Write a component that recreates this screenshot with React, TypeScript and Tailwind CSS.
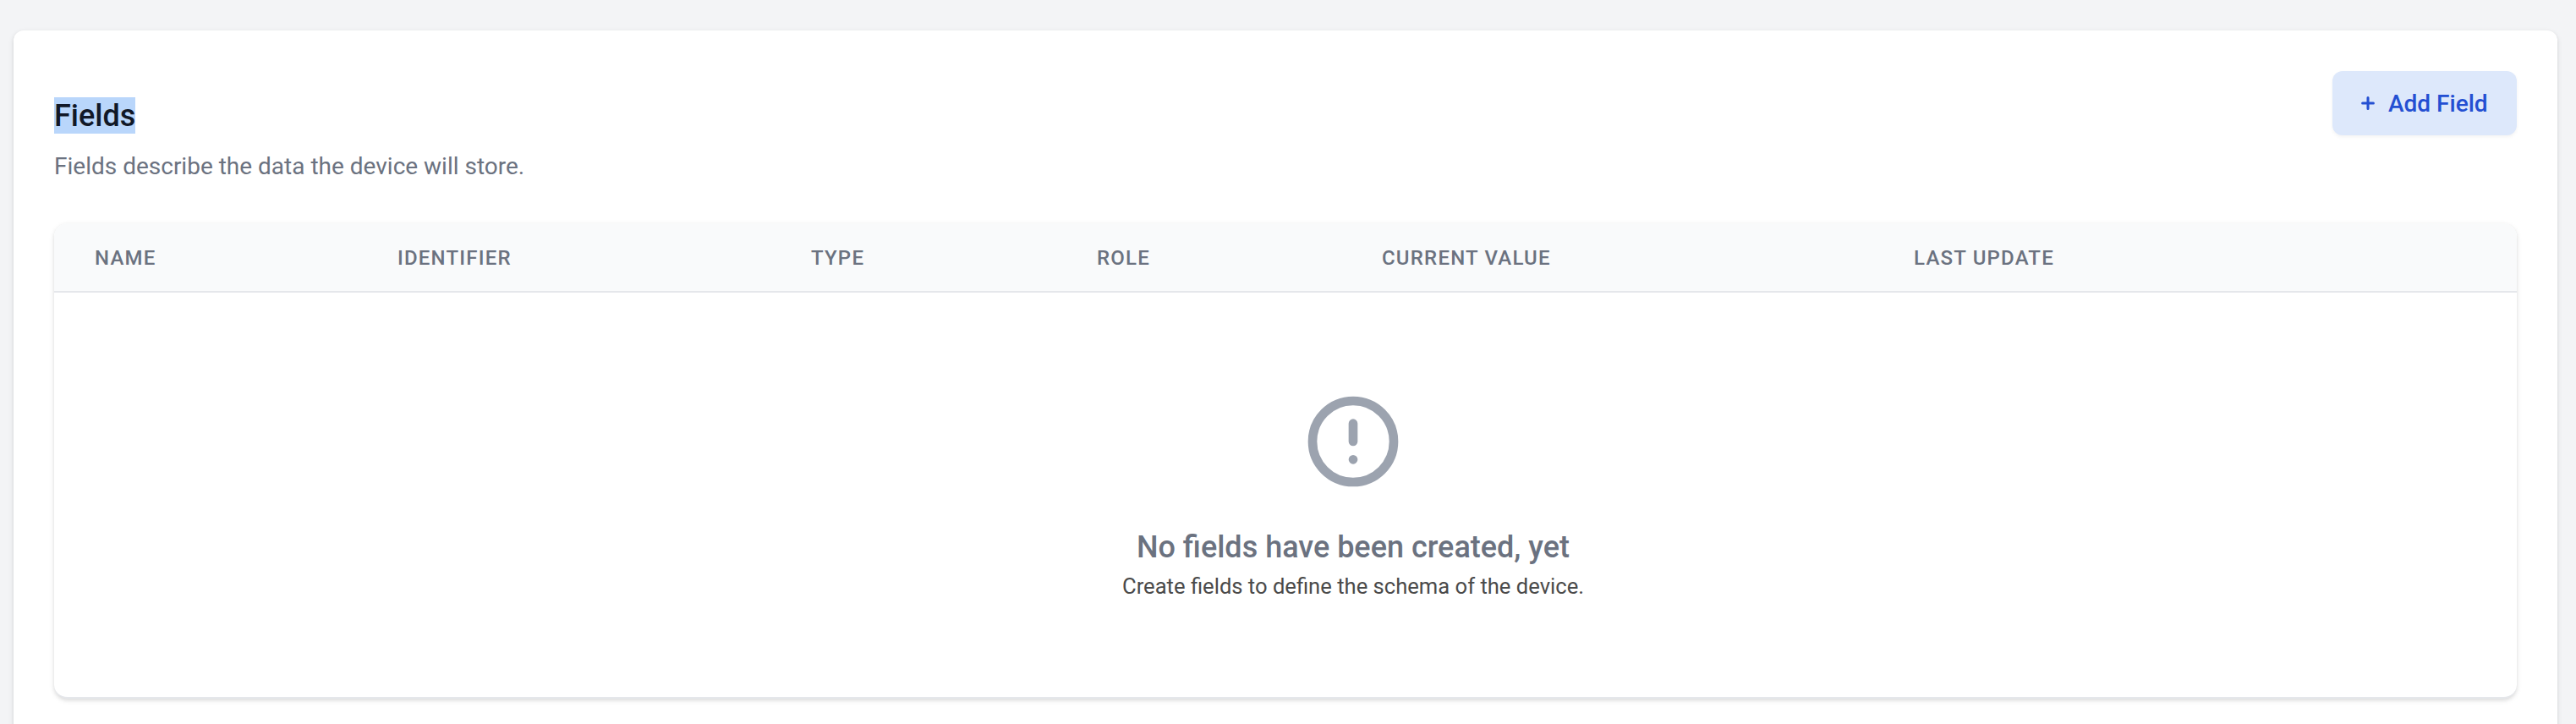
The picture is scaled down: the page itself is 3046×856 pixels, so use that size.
const columns = [
  { label: "Name", width: "w-[358px]" },
  { label: "Identifier", width: "w-[489px]" },
  { label: "Type", width: "w-[338px]" },
  { label: "Role", width: "w-[337px]" },
  { label: "Current value", width: "w-[629px]" },
  { label: "Last update", width: "w-[400px]" },
];

function PlusIcon() {
  return (
    <svg className="size-8" viewBox="0 0 20 20" fill="none" stroke="currentColor" strokeWidth={1.9} strokeLinecap="round">
      <path d="M10 6v8M6 10h8" />
    </svg>
  );
}

function ExclamationIcon() {
  return (
    <svg className="size-32 text-[#9ca3af]" viewBox="0 0 24 24" fill="none" stroke="currentColor" strokeWidth={2} strokeLinecap="round" strokeLinejoin="round">
      <path d="M12 8v4m0 4h.01M21 12a9 9 0 11-18 0 9 9 0 0118 0z" />
    </svg>
  );
}

export default function App() {
  return (
    <div className="h-[856px] overflow-hidden bg-[#f3f4f6] pt-9 pr-[22px] pl-4 font-['Roboto',sans-serif]">
      <section className="h-[900px] rounded-xl bg-white p-12 shadow-[0_2px_6px_rgba(0,0,0,0.1),0_2px_4px_rgba(0,0,0,0.06)]">
        <header className="flex h-[180px] items-start justify-between">
          <div className="pt-[29px]">
            <h3 className="text-4xl leading-[48px] font-medium text-[#111827]">
              <span className="bg-[#b9d6fb] pt-px">Fields</span>
            </h3>
            <p className="mt-4 text-[28px] leading-10 text-[#6b7280]">Fields describe the data the device will store.</p>
          </div>
          <button className="flex h-[76px] w-[218px] items-center rounded-xl bg-[#dde8fb] pl-[26px] text-[28px] leading-8 font-medium whitespace-nowrap text-[#244fd2] shadow-[0_2px_4px_rgba(0,0,0,0.05)]">
            <PlusIcon />
            <span className="ml-2 pt-0.5">Add Field</span>
          </button>
        </header>
        <div className="h-[562px] overflow-hidden rounded-2xl border-b-2 border-[#e5e7eb] bg-white shadow-[0_2px_6px_rgba(0,0,0,0.1),0_2px_4px_rgba(0,0,0,0.06)]">
          <div className="flex h-[82px] items-center border-b-2 border-[#e5e7eb] bg-[#f9fafb] pt-0.5 pl-12">
            {columns.map((column) => (
              <div key={column.label} className={`${column.width} shrink-0 text-2xl leading-8 font-medium tracking-wider text-[#6b7280] uppercase`}>
                {column.label}
              </div>
            ))}
          </div>
          <div className="flex flex-col items-center pt-28 pl-40">
            <ExclamationIcon />
            <h4 className="mt-[37px] text-4xl leading-[48px] font-medium text-[#6b7280]">No fields have been created, yet</h4>
            <p className="mt-0.5 text-[25.6px] leading-10 text-[#4a4a4a]">Create fields to define the schema of the device.</p>
          </div>
        </div>
      </section>
    </div>
  );
}
